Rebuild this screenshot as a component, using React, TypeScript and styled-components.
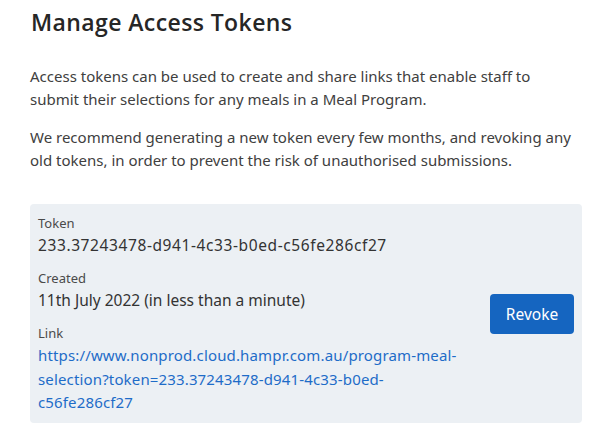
import React from "react";
import styled, { createGlobalStyle } from "styled-components";

const Global = createGlobalStyle`
  html, body { margin: 0; padding: 0; background: #ffffff; }
  body { font-family: "Noto Sans", "Open Sans", sans-serif; color: #3a3a3a; }
`;

const Page = styled.div`
  padding: 6px 31px 0 30px;
  width: 552px;
`;

const Title = styled.h1`
  font-family: "Open Sans", "Noto Sans", sans-serif;
  font-weight: 600;
  font-size: 23px;
  line-height: 32px;
  color: #262626;
  margin: 0 0 27px 1px;
  letter-spacing: 0.4px;
`;

const Paragraph = styled.p`
  font-size: 15px;
  line-height: 23px;
  margin: 0 0 15px 0;
  color: #404040;
`;

const Card = styled.div`
  margin-top: 32px;
  background: #ecf0f4;
  border-radius: 4px;
  padding: 9px 8px 8px 8px;
  display: flex;
  align-items: center;
  justify-content: space-between;
`;

const Fields = styled.dl`
  margin: 0;
  display: flex;
  flex-direction: column;
`;

const Label = styled.dt<{ $first?: boolean }>`
  font-size: 13px;
  line-height: 20px;
  color: #4a4a4a;
  margin-top: ${(p) => (p.$first ? "0" : "11px")};
`;

const Value = styled.dd<{ $spaced?: boolean }>`
  margin: 0;
  font-size: 15.5px;
  line-height: 24px;
  color: #333;
  letter-spacing: ${(p) => (p.$spaced ? "0.6px" : "0")};
`;

const LinkValue = styled.a`
  display: block;
  white-space: nowrap;
  font-size: 15px;
  line-height: 23.5px;
  letter-spacing: 0.15px;
  color: #1e6cc8;
  text-decoration: none;
  margin-top: 1px;
`;

const RevokeButton = styled.button`
  background: #1565c0;
  color: #ffffff;
  border: none;
  border-radius: 4px;
  font-family: "Noto Sans", sans-serif;
  font-size: 15.5px;
  padding: 0 15px;
  height: 40px;
  min-width: 84px;
  cursor: pointer;
`;

export default function App() {
  const url =
    "https://www.nonprod.cloud.hampr.com.au/program-meal-selection?token=233.37243478-d941-4c33-b0ed-c56fe286cf27";
  return (
    <>
      <Global />
      <Page>
        <Title>Manage Access Tokens</Title>
        <Paragraph>
          Access tokens can be used to create and share links that enable staff to submit their
          selections for any meals in a Meal Program.
        </Paragraph>
        <Paragraph>
          We recommend generating a new token every few months, and revoking any old tokens, in
          order to prevent the risk of unauthorised submissions.
        </Paragraph>
        <Card>
          <Fields>
            <Label $first>Token</Label>
            <Value $spaced>233.37243478-d941-4c33-b0ed-c56fe286cf27</Value>
            <Label>Created</Label>
            <Value>11th July 2022 (in less than a minute)</Value>
            <Label>Link</Label>
            <Value>
              <LinkValue href={url}>
                https://www.nonprod.cloud.hampr.com.au/program-meal-
                <br />
                selection?token=233.37243478-d941-4c33-b0ed-
                <br />
                c56fe286cf27
              </LinkValue>
            </Value>
          </Fields>
          <RevokeButton>Revoke</RevokeButton>
        </Card>
      </Page>
    </>
  );
}
